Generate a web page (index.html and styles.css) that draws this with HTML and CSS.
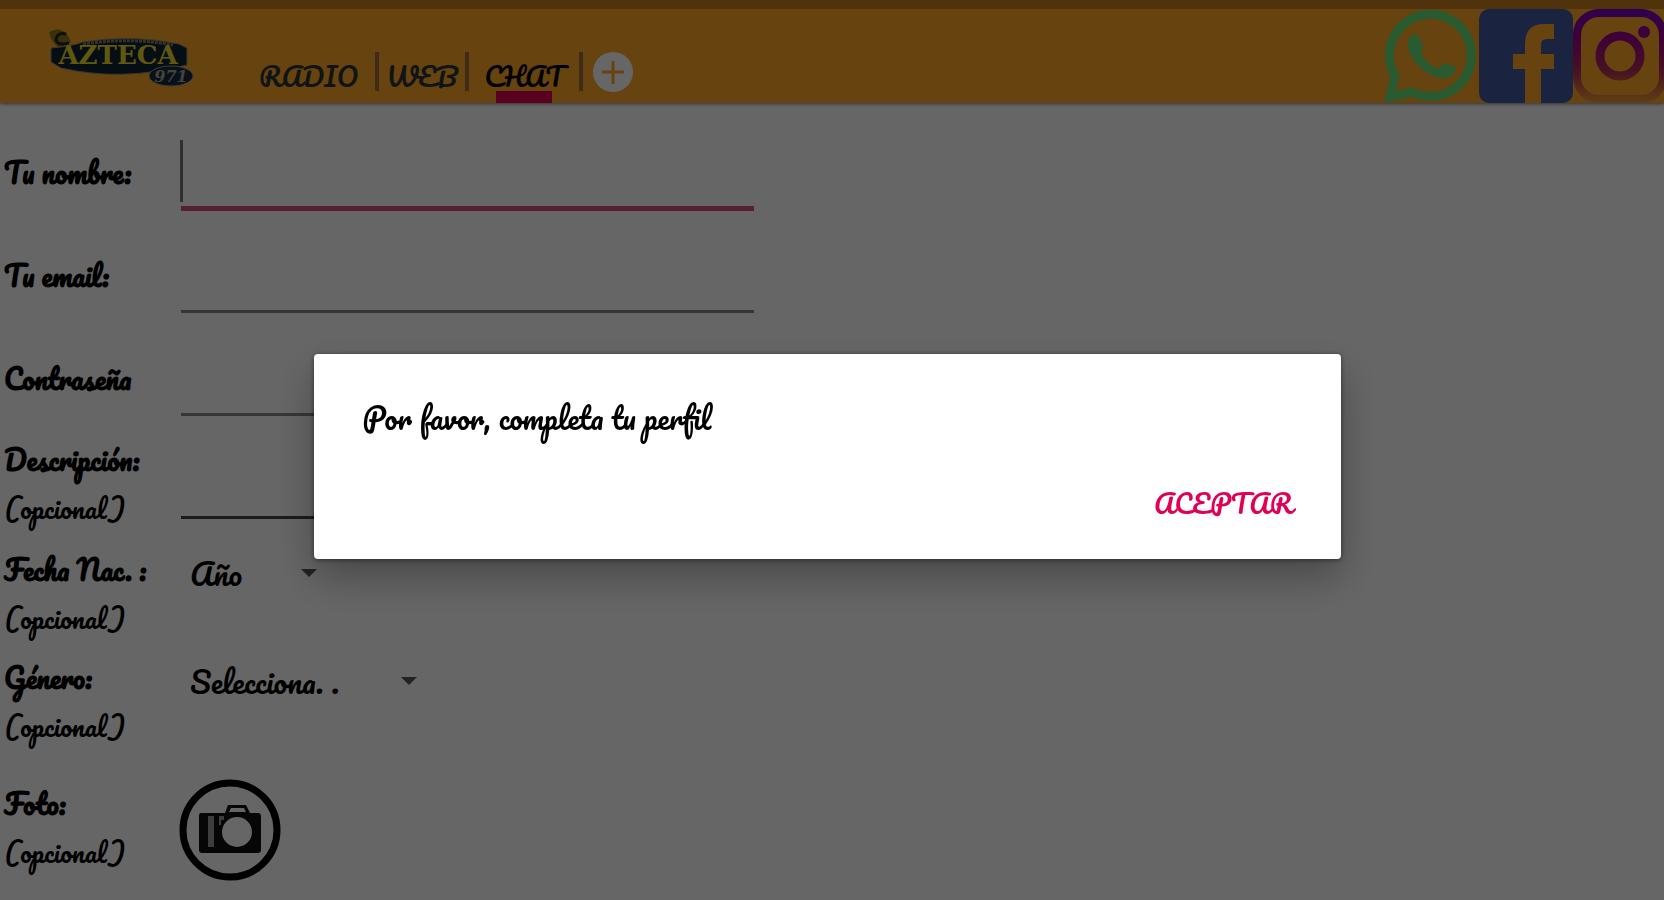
FILE: index.html
```html
<!DOCTYPE html>
<html lang="es">
<head>
    <meta charset="UTF-8">
    <meta name="viewport" content="width=device-width, initial-scale=1">
    <title>Azteca - Perfil</title>
    <link rel="stylesheet" href="styles.css">
</head>
<body>
    <!-- Cabecera -->
    <header class="header">
        <svg class="logo" viewBox="0 0 148 60" role="img" aria-label="Azteca">
            <path d="M4 20 Q26 18 36 14 Q84 6 132 16 L140 20 L140 37 Q75 54 14 40 L4 34 Z" fill="#102436" stroke="#8d8b70" stroke-width="1"/>
            <path d="M36 16 Q84 9 126 17" fill="none" stroke="#807a68" stroke-width="3" stroke-dasharray="3 1"/>
            <path d="M2 4 Q12 -2 20 6 L24 14 L12 20 Q4 14 2 4Z" fill="#8d7c1e"/>
            <path d="M19 6 Q10 4 9 12 Q11 18 22 15" fill="none" stroke="#223" stroke-width="3"/>
            <text class="logo-text" x="71" y="36" text-anchor="middle">AZTECA</text>
            <ellipse cx="124" cy="48" rx="22" ry="10" fill="#14283f" stroke="#9c9c8c" stroke-width="1"/>
            <text class="logo-small" x="124" y="54" text-anchor="middle">971</text>
        </svg>
        <nav class="menu">
            <a class="tab tab-radio" href="#radio">RADIO</a>
            <a class="tab tab-web" href="#web">WEB</a>
            <a class="tab tab-chat activo" href="#chat">CHAT</a>
            <button class="btn-mas" type="button" aria-label="Más">
                <svg viewBox="0 0 40 40"><circle cx="20" cy="20" r="20" fill="#fff"/><path d="M20 9v23M9 20h22" stroke="#ffa726" stroke-width="3"/></svg>
            </button>
        </nav>
        <div class="redes">
            <a href="#whatsapp" aria-label="WhatsApp">
                <svg width="94" height="94" viewBox="0 0 94 94">
                    <path d="M5 88 L10 67 A41 41 0 1 1 27 83 Z" fill="none" stroke="#67e078" stroke-width="9"/>
                    <path d="M30 25 C25 26 22 31 23 38 C25 52 42 67 56 69 C64 70 70 66 71 58 L59 54 L53 60 C46 57 39 51 36 44 L38 36 L33 26 Z" fill="#67e078"/>
                </svg>
            </a>
            <a href="#facebook" aria-label="Facebook">
                <svg width="94" height="94" viewBox="0 0 94 94">
                    <path d="M10 0h74a10 10 0 0 1 10 10v74a10 10 0 0 1-10 10H62V60h13V45H62V36q0-6 6-6h7V15H65q-19 0-19 20v10H34v15h12v34H10A10 10 0 0 1 0 84V10A10 10 0 0 1 10 0z" fill="#43599f"/>
                </svg>
            </a>
            <a href="#instagram" aria-label="Instagram">
                <svg width="91" height="94" viewBox="0 0 91 94">
                    <defs>
                        <linearGradient id="ig" gradientUnits="userSpaceOnUse" x1="0" y1="0" x2="0" y2="94">
                            <stop offset="0" stop-color="#7900c4"/>
                            <stop offset="0.3" stop-color="#9c0088"/>
                            <stop offset="0.65" stop-color="#b02c58"/>
                            <stop offset="1" stop-color="#f09a32"/>
                        </linearGradient>
                    </defs>
                    <rect x="4" y="4" width="86" height="86" rx="22" fill="none" stroke="url(#ig)" stroke-width="8"/>
                    <circle cx="47" cy="47" r="20" fill="none" stroke="url(#ig)" stroke-width="9"/>
                    <circle cx="71" cy="23" r="6" fill="url(#ig)"/>
                </svg>
            </a>
        </div>
    </header>

    <!-- Formulario del perfil -->
    <form class="perfil">
        <div class="fila">
            <label class="etiqueta" for="nombre">Tu nombre:</label>
            <div class="campo foco"><input type="text" id="nombre"></div>
        </div>
        <div class="fila">
            <label class="etiqueta" for="email">Tu email:</label>
            <div class="campo"><input type="email" id="email"></div>
        </div>
        <div class="fila">
            <label class="etiqueta" for="clave">Contraseña</label>
            <div class="campo"><input type="password" id="clave"></div>
        </div>
        <div class="fila fila-desc">
            <label class="etiqueta" for="descripcion">Descripción:<span class="opcional">(opcional)</span></label>
            <div class="campo"><input type="text" id="descripcion"></div>
        </div>
        <div class="fila fila-corta">
            <label class="etiqueta" for="anio">Fecha Nac. :<span class="opcional">(opcional)</span></label>
            <div class="lista lista-anio"><select id="anio"><option>Año</option></select></div>
        </div>
        <div class="fila fila-corta">
            <label class="etiqueta" for="genero">Género:<span class="opcional">(opcional)</span></label>
            <div class="lista lista-genero"><select id="genero"><option>Selecciona. .</option></select></div>
        </div>
        <div class="fila fila-foto">
            <label class="etiqueta" for="foto">Foto:<span class="opcional">(opcional)</span></label>
            <button class="btn-foto" type="button" id="foto" aria-label="Foto">
                <svg viewBox="0 0 102 102">
                    <circle cx="51" cy="51" r="47" fill="none" stroke="#000" stroke-width="7"/>
                    <path d="M22 34h24l3-8h18l4 8h8q3 0 3 3v34q0 3-3 3H23q-3 0-3-3V37q0-3 2-3z" fill="#111"/>
                    <path d="M50 33l2-4h13l2 4z" fill="#fff"/>
                    <path d="M29 37h6v31h-6zM40 37h5v4h-3v5h-2z" fill="#999"/>
                    <circle cx="58" cy="53" r="15" fill="#fff"/>
                </svg>
            </button>
        </div>
    </form>

    <!-- Aviso -->
    <div class="fondo">
        <div class="aviso" role="dialog" aria-modal="true" aria-labelledby="aviso-texto">
            <p class="aviso-texto" id="aviso-texto">Por favor, completa tu perfil</p>
            <button class="btn-aceptar" type="button">ACEPTAR</button>
        </div>
    </div>
</body>
</html>
```

FILE: styles.css
```css
* {
    box-sizing: border-box;
}
body {
    margin: 0;
    min-height: 100vh;
    background: #fff;
    color: #000;
    font-family: Pacifico, Lato, cursive;
    font-size: 26px;
    overflow: hidden;
}
button, input, select {
    font: inherit;
    color: inherit;
    background: none;
    border: none;
    border-radius: 0;
    padding: 0;
    margin: 0;
    outline: none;
}
svg {
    display: block;
}

/* Cabecera */
.header {
    display: flex;
    align-items: flex-start;
    height: 103px;
    border-top: 9px solid #c8801e;
    background: #ffa726;
    box-shadow: 0 1px 3px rgba(0, 0, 0, 0.5);
}
.logo {
    width: 148px;
    height: 60px;
    margin: 19px 47px 0;
}
.logo-text {
    font: bold 26px "DejaVu Serif", serif;
    fill: #f0dc28;
}
.logo-small {
    font: italic bold 16px "DejaVu Serif", serif;
    fill: #a8a890;
}
.menu {
    display: flex;
    margin-top: 43px;
}
.tab {
    position: relative;
    height: 39px;
    padding-top: 9px;
    border-right: 4px solid #a06c40;
    color: #263238;
    font-size: 26px;
    line-height: 31px;
    text-align: center;
    text-decoration: none;
}
.tab-radio {
    width: 137px;
}
.tab-web {
    width: 90px;
}
.tab-chat {
    width: 114px;
}
.tab.activo {
    color: #000;
}
.tab.activo::after {
    content: "";
    position: absolute;
    left: 50%;
    top: 100%;
    width: 56px;
    height: 12px;
    margin-left: -28px;
    background: #e00050;
}
.btn-mas {
    width: 40px;
    height: 40px;
    margin-left: 10px;
}
.redes {
    display: flex;
    margin-left: auto;
}

/* Formulario */
.perfil {
    padding-top: 5px;
}
.fila {
    display: flex;
    align-items: flex-start;
    height: 103px;
}
.etiqueta {
    width: 181px;
    padding: 40px 0 0 4px;
    font-size: 27px;
    font-weight: bold;
    line-height: 49px;
}
.opcional {
    display: block;
    font-size: 26px;
    font-weight: normal;
}
.campo {
    position: relative;
    width: 573px;
    height: 103px;
    padding-bottom: 1px;
}
.campo input {
    width: 100%;
    height: 100%;
    border-bottom: 3px solid #888;
}
.campo.foco {
    padding-bottom: 0;
}
.campo.foco input {
    border-bottom: 5px solid #d85078;
}
/* Cursor de texto */
.campo.foco::before {
    content: "";
    position: absolute;
    left: -1px;
    top: 32px;
    width: 3px;
    height: 62px;
    background: #777;
}
.fila-desc {
    height: 128px;
}
.fila-desc .etiqueta {
    padding-top: 18px;
}
.fila-desc input {
    border-bottom-color: #444;
}
.fila-corta {
    height: 108px;
}
.fila-corta .etiqueta, .fila-foto .etiqueta {
    padding-top: 0;
}
.lista {
    position: relative;
    padding-left: 9px;
}
.lista select {
    width: 100%;
    height: 56px;
    font-size: 30px;
    appearance: none;
}
.lista::after {
    content: "";
    position: absolute;
    right: 0;
    top: 24px;
    border: 8px solid transparent;
    border-top-color: #555;
    border-bottom: none;
    pointer-events: none;
}
.lista-anio {
    width: 136px;
}
.lista-genero {
    width: 236px;
}
.fila-foto {
    padding-top: 18px;
}
.btn-foto {
    width: 102px;
    height: 102px;
    margin-left: -2px;
}

/* Aviso */
.fondo {
    position: fixed;
    inset: 0;
    display: flex;
    align-items: center;
    justify-content: center;
    padding: 13px 9px 0 0;
    background: rgba(0, 0, 0, 0.6);
}
.aviso {
    display: flex;
    flex-direction: column;
    width: 62%;
    padding: 40px 48px 32px 48px;
    border-radius: 4px;
    background: #fff;
    box-shadow: 0 18px 40px rgba(0, 0, 0, 0.3), 0 1px 5px rgba(0, 0, 0, 0.5);
}
.aviso-texto {
    margin: 0 0 37px;
    font-size: 29px;
    line-height: 48px;
}
.btn-aceptar {
    align-self: flex-end;
    color: #e00055;
    font-size: 26px;
    line-height: 48px;
    cursor: pointer;
}
```
